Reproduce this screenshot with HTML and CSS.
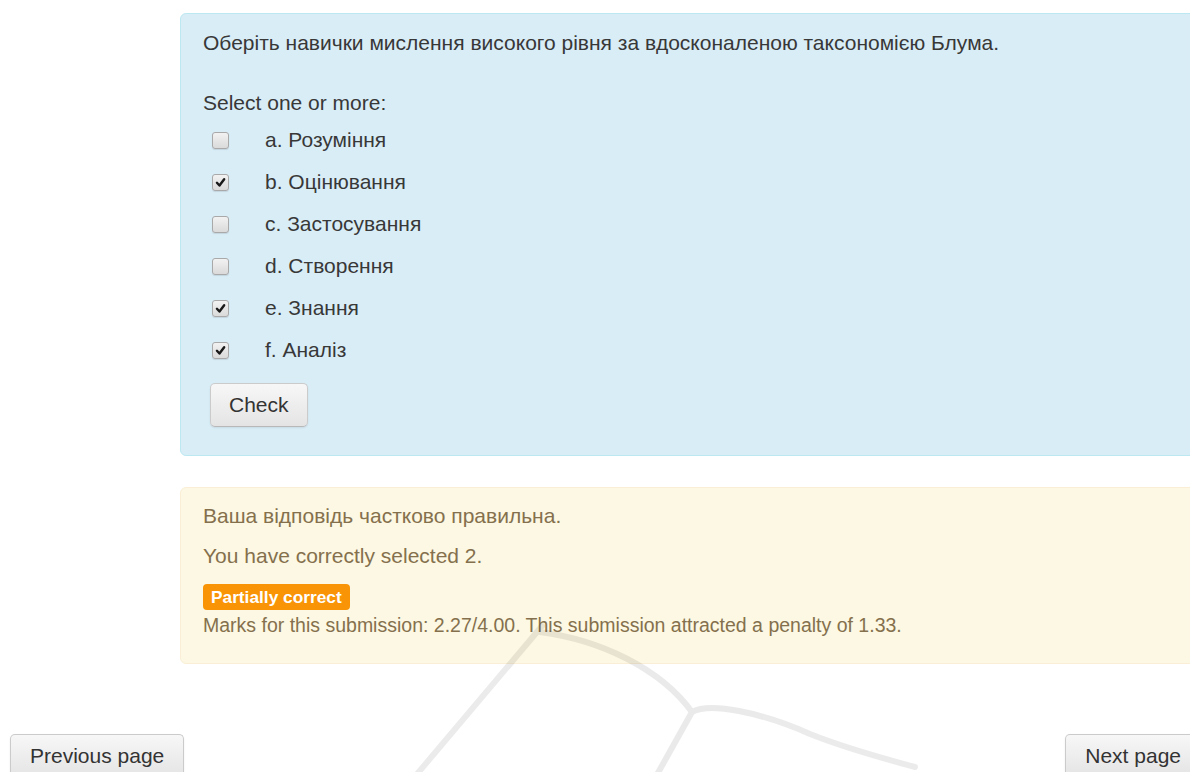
FILE: index.html
```html
<!DOCTYPE html>
<html lang="uk">
<head>
<meta charset="utf-8">
<title>Питання</title>
<link rel="stylesheet" href="styles.css">
</head>
<body>
<div class="page">
  <div class="que">
    <div class="formulation">
      <div class="qtext">Оберіть навички мислення високого рівня за вдосконаленою таксономією Блума.</div>
      <div class="prompt">Select one or more:</div>
      <div class="answer">
        <label class="option"><span class="cb"></span><span class="opt-text">a. Розуміння</span></label>
        <label class="option"><span class="cb"><svg viewBox="0 0 16 16"><path d="M4.2 8.3 L6.9 11.2 L11.9 4.6"/></svg></span><span class="opt-text">b. Оцінювання</span></label>
        <label class="option"><span class="cb"></span><span class="opt-text">c. Застосування</span></label>
        <label class="option"><span class="cb"></span><span class="opt-text">d. Створення</span></label>
        <label class="option"><span class="cb"><svg viewBox="0 0 16 16"><path d="M4.2 8.3 L6.9 11.2 L11.9 4.6"/></svg></span><span class="opt-text">e. Знання</span></label>
        <label class="option"><span class="cb"><svg viewBox="0 0 16 16"><path d="M4.2 8.3 L6.9 11.2 L11.9 4.6"/></svg></span><span class="opt-text">f. Аналіз</span></label>
      </div>
      <button class="btn check" type="button">Check</button>
    </div>
    <div class="outcome">
      <p class="feedback">Ваша відповідь частково правильна.</p>
      <p class="feedback second">You have correctly selected 2.</p>
      <div class="grading">
        <span class="badge">Partially correct</span>
        <div class="marks">Marks for this submission: 2.27/4.00. This submission attracted a penalty of 1.33.</div>
      </div>
    </div>
  </div>
  <div class="nav">
    <button class="btn" type="button">Previous page</button>
    <button class="btn" type="button">Next page</button>
  </div>
  <svg class="watermark" viewBox="0 0 1201 772" aria-hidden="true">
    <g class="mark">
      <path d="M542 626 L412 780"/>
      <path d="M540 632 C600 640, 660 668, 692 712"/>
      <path d="M692 712 L654 780"/>
      <path d="M692 712 C710 702, 760 712, 810 734 C850 750, 890 760, 915 767"/>
    </g>
  </svg>
</div>
</body>
</html>
```

FILE: styles.css
```css
html, body {
  margin: 0;
  padding: 0;
  overflow: hidden;
  background: #fff;
}

body {
  font-family: "Liberation Sans", Arial, sans-serif;
  font-size: 21px;
  color: #333;
}

.page {
  position: relative;
  width: 1201px;
  height: 772px;
  padding-top: 13px;
  box-sizing: border-box;
}

.que {
  margin-left: 180px;
}

/* question body */
.formulation {
  background: #d9edf7;
  border: 1px solid #bce8f1;
  border-radius: 6px;
  padding: 14px 22px 28px;
  color: #383838;
}

.qtext,
.prompt {
  line-height: 30px;
}

.prompt {
  margin-top: 30px;
}

.answer {
  margin-top: 1px;
  display: flex;
  flex-direction: column;
}

.option {
  display: flex;
  align-items: center;
  height: 42px;
}

.cb {
  width: 17px;
  height: 17px;
  margin-left: 9px;
  margin-right: 36px;
  box-sizing: border-box;
  border: 1px solid #a9a9a9;
  border-radius: 3px;
  background: linear-gradient(#f2f2f2, #dadada);
  box-shadow: 0 1px 1px rgba(0, 0, 0, 0.1);
  display: flex;
}

.cb svg {
  width: 15px;
  height: 15px;
}

.cb path {
  fill: none;
  stroke: #1a1a1a;
  stroke-width: 2.6;
  stroke-linecap: round;
  stroke-linejoin: round;
}

.btn {
  height: 44px;
  padding: 0 19px;
  font-family: inherit;
  font-size: 21px;
  color: #333;
  background: linear-gradient(#f7f7f7, #e4e4e4);
  border: 1px solid #cbcbcb;
  border-bottom-color: #b8b8b8;
  border-radius: 5px;
  box-shadow: 0 1px 2px rgba(0, 0, 0, 0.08);
}

.check {
  margin-top: 12px;
  margin-left: 7px;
  padding: 0 18px;
}

/* feedback */
.outcome {
  margin-top: 31px;
  background: #fcf8e3;
  border: 1px solid #faefd6;
  border-radius: 6px;
  padding: 13px 22px 25px;
  color: #85704d;
}

.feedback {
  margin: 0;
  line-height: 30px;
}

.feedback.second {
  margin-top: 10px;
}

.grading {
  margin-top: 13px;
  font-size: 19.5px;
}

.badge {
  display: inline-block;
  height: 26px;
  line-height: 26px;
  padding: 0 8px;
  border-radius: 4px;
  background: #f89406;
  color: #fff;
  font-weight: bold;
  font-size: 17.3px;
}

.marks {
  margin-top: 2px;
  line-height: 26px;
}

/* page navigation */
.nav {
  margin-top: 70px;
  padding-left: 10px;
  display: flex;
  justify-content: space-between;
}

.watermark {
  position: absolute;
  left: 0;
  top: 0;
  width: 1201px;
  height: 772px;
  pointer-events: none;
}

.watermark .mark {
  opacity: 0.08;
}

.watermark path {
  fill: none;
  stroke: #000;
  stroke-width: 6;
  stroke-linecap: round;
}
```
